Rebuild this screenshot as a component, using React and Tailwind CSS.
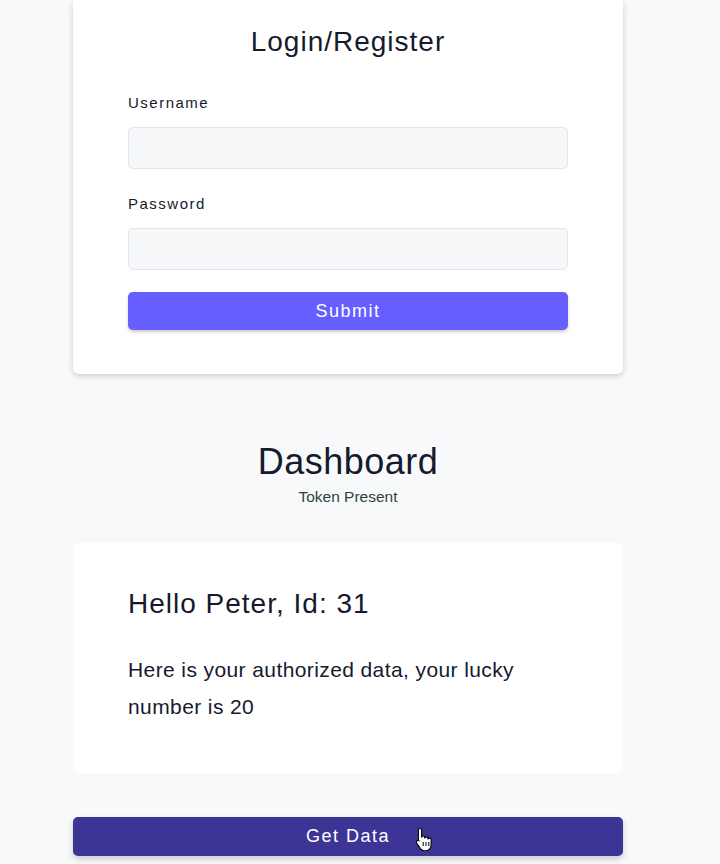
import React from 'react';

const HandCursor = () => (
  <svg width="18" height="24" viewBox="0 0 18 24" className="absolute left-[342px] top-[10px]">
    <path
      d="M5 1.5c.9 0 1.6.7 1.6 1.6v7.2c.2-.8.9-1.3 1.6-1.3.9 0 1.6.7 1.6 1.6v.5c.2-.7.9-1.2 1.6-1.2.9 0 1.6.7 1.6 1.6v.6c.2-.6.8-1 1.5-1 .9 0 1.6.7 1.6 1.6v5.2c0 3.2-2.4 5.9-5.6 5.9H9.6c-1.7 0-3.2-.8-4.2-2.2L1.6 16c-.5-.8-.3-1.8.4-2.3.7-.5 1.7-.3 2.2.3l-.8-.9V3.1c0-.9.7-1.6 1.6-1.6z"
      fill="#fff"
      stroke="#000"
      strokeWidth="1.1"
      strokeLinejoin="round"
    />
    <path d="M8.2 15v4M11 15v4M13.8 15v4" stroke="#000" strokeWidth="1" />
  </svg>
);

const App = () => {
  return (
    <div className="min-h-[864px] bg-[#f8f9fb] font-['Liberation_Sans',Arial,sans-serif] text-[#151a2d]">
      <div className="w-[550px] ml-[73px]">
        {/* Login card */}
        <div className="bg-white rounded-b-md shadow-[0_2px_6px_rgba(0,0,0,0.18)] px-[55px] pt-[26px] pb-[44px]">
          <h2 className="text-[28px] leading-[32px] text-center tracking-[1px]">Login/Register</h2>
          <label className="block mt-[35px] text-[15px] leading-[20px] tracking-[1.5px]">Username</label>
          <input className="block w-full h-[42px] mt-[14px] bg-[#f7f8fa] border border-[#e1e6ef] rounded-[5px] outline-none" />
          <label className="block mt-[25px] text-[15px] leading-[20px] tracking-[1.5px]">Password</label>
          <input
            type="password"
            className="block w-full h-[42px] mt-[14px] bg-[#f7f8fa] border border-[#e1e6ef] rounded-[5px] outline-none"
          />
          <button className="block w-full h-[38px] mt-[22px] bg-[#665eff] text-white text-[18px] tracking-[1.5px] rounded-[5px] shadow-[0_2px_3px_rgba(0,0,0,0.2)]">
            Submit
          </button>
        </div>

        {/* Dashboard */}
        <div className="mt-[68px] text-center">
          <h1 className="text-[36px] leading-[40px] tracking-[0.5px]">Dashboard</h1>
          <p className="mt-[5px] text-[15.5px] leading-[20px] text-[#2f4339]">Token Present</p>
        </div>

        <div className="mt-[36px] bg-white rounded-[5px] px-[55px] pt-[45px] pb-[48px]">
          <h3 className="text-[28px] leading-[32px] tracking-[1px]">Hello Peter, Id: 31</h3>
          <p className="mt-[31px] text-[21px] leading-[37px] tracking-[0.4px]">
            Here is your authorized data, your lucky number is 20
          </p>
        </div>

        <div className="relative mt-[44px]">
          <button className="block w-full h-[39px] bg-[#3d3596] text-white text-[18px] tracking-[1.5px] rounded-[5px] shadow-[0_3px_6px_rgba(0,0,0,0.2)]">
            Get Data
          </button>
          <HandCursor />
        </div>
      </div>
    </div>
  );
};

export default App;
